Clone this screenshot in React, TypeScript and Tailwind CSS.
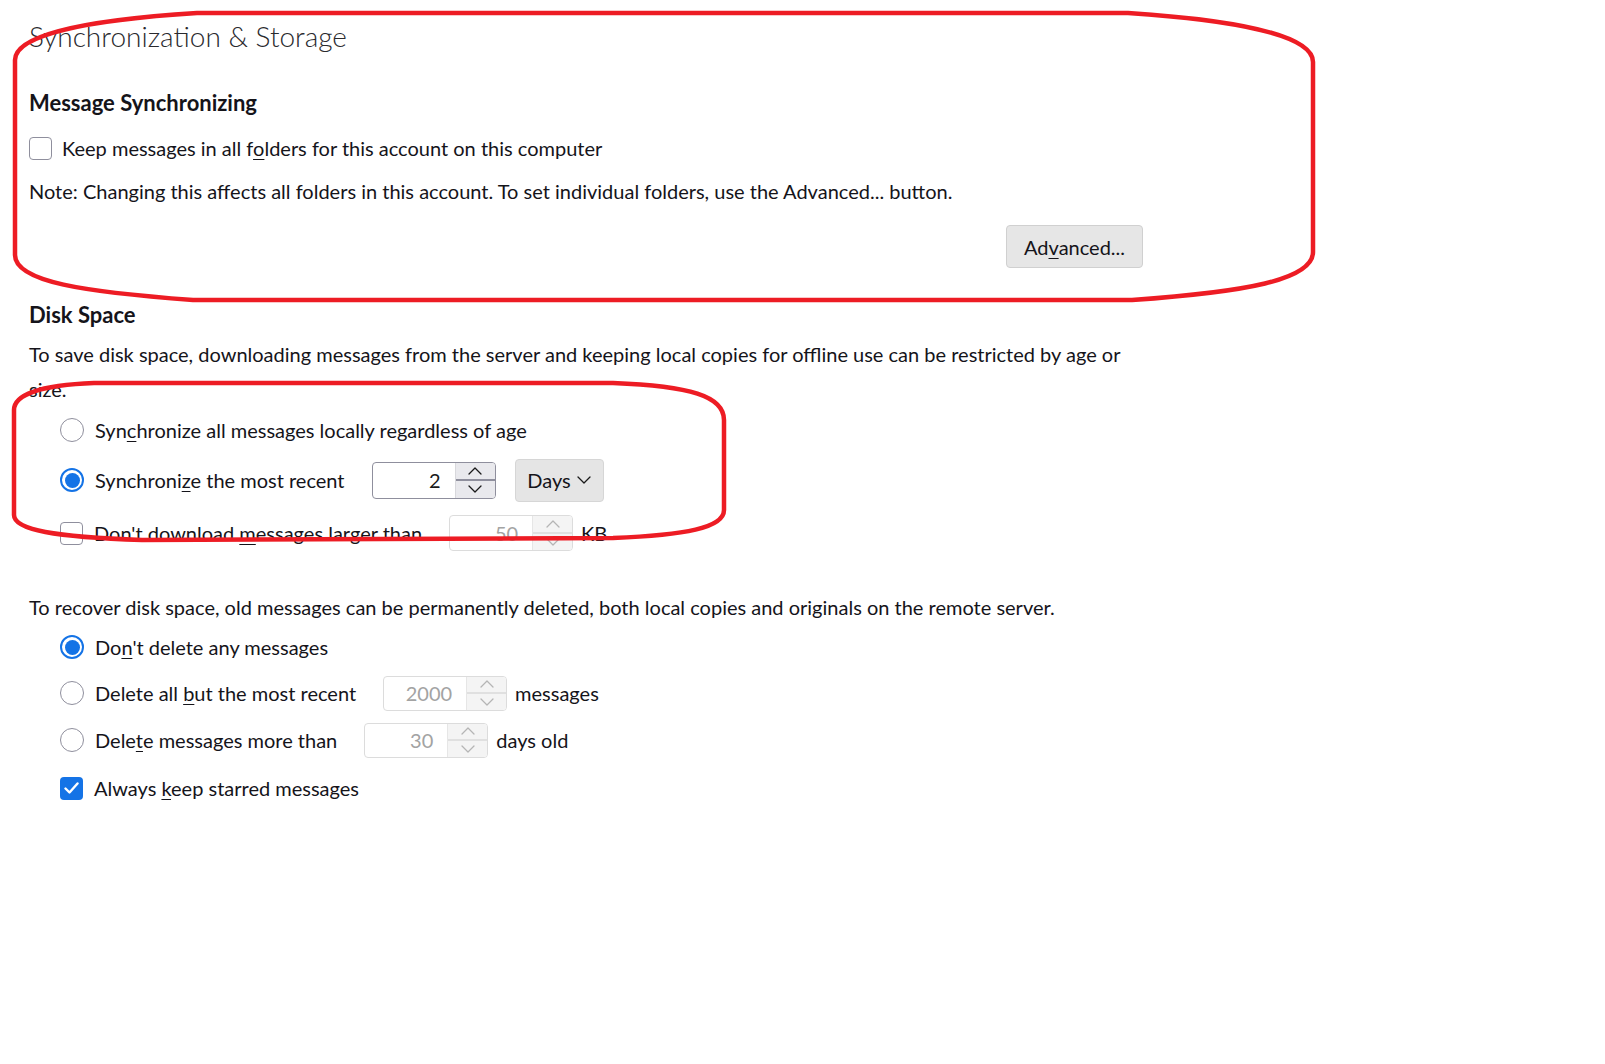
import React from "react";

function U({ children }: { children: React.ReactNode }) {
  return <span className="underline decoration-1 underline-offset-[3px]">{children}</span>;
}

function Chevron({ up, color = "#1a1a1a", w = 14 }: { up?: boolean; color?: string; w?: number }) {
  return (
    <svg width={w} height={8} viewBox="0 0 14 8" fill="none">
      <polyline
        points={up ? "1,7 7,1 13,7" : "1,1 7,7 13,1"}
        stroke={color}
        strokeWidth="1.3"
        strokeLinejoin="round"
        strokeLinecap="round"
      />
    </svg>
  );
}

function Radio({ checked }: { checked?: boolean }) {
  if (checked) {
    return (
      <div className="w-[24px] h-[24px] shrink-0 rounded-full border-2 border-[#1473e6] flex items-center justify-center">
        <div className="w-[15px] h-[15px] rounded-full bg-[#1473e6]" />
      </div>
    );
  }
  return <div className="w-[24px] h-[24px] shrink-0 rounded-full border border-[#8f8f9d] bg-white" />;
}

function Check({ checked }: { checked?: boolean }) {
  if (checked) {
    return (
      <div className="w-[23px] h-[23px] shrink-0 rounded-[4px] bg-[#1473e6] flex items-center justify-center">
        <svg width="15" height="12" viewBox="0 0 15 12" fill="none">
          <polyline points="1.5,6.5 5.5,10.5 13.5,1.5" stroke="white" strokeWidth="2.4" strokeLinecap="round" strokeLinejoin="round" />
        </svg>
      </div>
    );
  }
  return <div className="w-[23px] h-[23px] shrink-0 rounded-[4px] border border-[#8f8f9d] bg-white" />;
}

function Spin({ value, disabled, h = 36 }: { value: string; disabled?: boolean; h?: number }) {
  const box = disabled ? "border-[#dcdcdc]" : "border-[#8f8f9d]";
  return (
    <div
      className={`flex w-[124px] rounded-[4px] border overflow-hidden bg-white ${box}`}
      style={{ height: h }}
    >
      <div
        className={`flex-1 flex items-center justify-end pr-[14px] ${disabled ? "text-[#a3a3a3]" : "text-[#1a1a1a]"}`}
      >
        {value}
      </div>
      {disabled ? (
        <div className="w-[40px] flex flex-col bg-[#f4f4f4] border-l border-[#e6e6e6]">
          <div className="flex-1 flex items-center justify-center border-b-2 border-[#e0e0e0]">
            <Chevron up color="#b5b5b5" />
          </div>
          <div className="flex-1 flex items-center justify-center">
            <Chevron color="#b5b5b5" />
          </div>
        </div>
      ) : (
        <div className="w-[40px] flex flex-col bg-[#e9e9ed] border-l border-[#d8d8dc]">
          <div className="flex-1 flex items-center justify-center border-b-2 border-[#8f8f9d]">
            <Chevron up />
          </div>
          <div className="flex-1 flex items-center justify-center">
            <Chevron />
          </div>
        </div>
      )}
    </div>
  );
}

function Annotations() {
  return (
    <svg className="absolute left-0 top-0 pointer-events-none" width="1605" height="1064" fill="none">
      <path
        d="M 197 13 L 1128 13 C 1235 20, 1313 35, 1313 62 L 1313 252 C 1313 280, 1245 292, 1132 300 L 193 300 C 85 292, 15 282, 15 255 L 15 60 C 15 35, 85 20, 197 13 Z"
        stroke="#ed1c24"
        strokeWidth="4.5"
      />
      <path
        d="M 94 383 L 613 383 C 690 386, 724 396, 724 420 L 724 510 C 724 528, 685 535, 613 538 L 142 540 C 55 537, 14 530, 14 515 L 14 410 C 14 394, 42 385, 94 383 Z"
        stroke="#ed1c24"
        strokeWidth="4.5"
      />
    </svg>
  );
}

export default function App() {
  return (
    <div className="relative w-[1605px] h-[1064px] bg-white overflow-hidden font-['Lato','Liberation_Sans',sans-serif] text-[20px] text-[#15141a]">
      <div className="pl-[29px] pt-[16px] w-[1143px]">
        <h1 className="text-[28px] font-light leading-[40px] text-[#2a2a2e]">Synchronization &amp; Storage</h1>

        <h2 className="mt-[32px] text-[22px] font-bold leading-[30px]">Message Synchronizing</h2>

        <label className="mt-[15px] flex items-center gap-[10px] h-[30px]">
          <Check />
          <span>
            Keep messages in all f<U>o</U>lders for this account on this computer
          </span>
        </label>

        <p className="mt-[13px] leading-[30px]">
          Note: Changing this affects all folders in this account. To set individual folders, use the Advanced... button.
        </p>

        <div className="mt-[19px] flex justify-end">
          <button className="h-[43px] w-[137px] rounded-[4px] bg-[#e6e6e6] border border-[#d0d0d0]">
            Ad<U>v</U>anced...
          </button>
        </div>

        <h2 className="mt-[32px] text-[22px] font-bold leading-[30px]">Disk Space</h2>

        <p className="mt-[7px] leading-[35px]">
          <span className="whitespace-nowrap">
            To save disk space, downloading messages from the server and keeping local copies for offline use can be restricted by age or
          </span>
          <br />
          size.
        </p>

        <div className="ml-[31px]">
          <div className="mt-[5px] flex items-center h-[36px] gap-[11px]">
            <Radio />
            <span>
              Syn<U>c</U>hronize all messages locally regardless of age
            </span>
          </div>

          <div className="mt-[10px] flex items-center h-[44px]">
            <Radio checked />
            <span className="ml-[11px] mr-[27px]">
              Synchroni<U>z</U>e the most recent
            </span>
            <Spin value="2" h={37} />
            <button className="ml-[19px] h-[43px] w-[89px] rounded-[4px] bg-[#e5e5e5] border border-[#d6d6d6] flex items-center justify-center gap-[6px]">
              <span>Days</span>
              <Chevron />
            </button>
          </div>

          <div className="mt-[11px] flex items-center h-[40px]">
            <Check />
            <span className="ml-[11px] mr-[27px]">
              Don't download <U>m</U>essages larger than
            </span>
            <Spin value="50" disabled />
            <span className="ml-[8px]">KB</span>
          </div>
        </div>

        <p className="mt-[39px] leading-[30px]">
          To recover disk space, old messages can be permanently deleted, both local copies and originals on the remote server.
        </p>

        <div className="ml-[31px]">
          <div className="mt-[7px] flex items-center h-[36px] gap-[11px]">
            <Radio checked />
            <span>
              Do<U>n</U>'t delete any messages
            </span>
          </div>

          <div className="mt-[10px] flex items-center h-[36px]">
            <Radio />
            <span className="ml-[11px] mr-[27px]">
              Delete all <U>b</U>ut the most recent
            </span>
            <Spin value="2000" disabled h={35} />
            <span className="ml-[8px]">messages</span>
          </div>

          <div className="mt-[11px] flex items-center h-[36px]">
            <Radio />
            <span className="ml-[11px] mr-[27px]">
              Dele<U>t</U>e messages more than
            </span>
            <Spin value="30" disabled h={35} />
            <span className="ml-[8px]">days old</span>
          </div>

          <div className="mt-[12px] flex items-center h-[36px] gap-[11px]">
            <Check checked />
            <span>
              Always <U>k</U>eep starred messages
            </span>
          </div>
        </div>
      </div>

      <Annotations />
    </div>
  );
}
